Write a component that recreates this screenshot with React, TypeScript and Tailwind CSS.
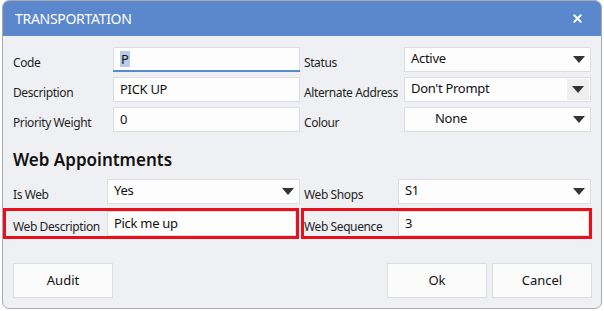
import { X } from "lucide-react";

const font = { fontFamily: '"Noto Sans", "Open Sans", sans-serif' };

function Arrow() {
    return (
        <svg width="12" height="7" viewBox="0 0 12 7" className="shrink-0">
            <path d="M0 0 H12 L6 7 Z" fill="#333" />
        </svg>
    );
}

function TextBox({ value, focused = false, w }: { value: string; focused?: boolean; w: string }) {
    return (
        <div className={`${w} h-[25px] bg-[#fdfdfd] border border-[#dedede] relative flex items-start pt-[3px] pl-[6px] text-[13px] tracking-[-0.3px] text-[#111]`}>
            {focused ? <span className="bg-[#b7cbeb] px-[1px] leading-[16px]">{value}</span> : <span className="leading-[16px]">{value}</span>}
            {focused && <div className="absolute left-[-1px] right-[-1px] bottom-[-1px] h-[2px] bg-[#5b87cd]"></div>}
        </div>
    );
}

function SelectBox({ value, w, indent = "pl-[6px]", boxed = false }: { value: string; w: string; indent?: string; boxed?: boolean }) {
    return (
        <div className={`${w} h-[25px] bg-[#fdfdfd] border border-[#dedede] flex items-center justify-between text-[13px] tracking-[-0.3px] text-[#111]`}>
            <span className={`${indent} leading-[16px] -mt-[3px]`}>{value}</span>
            {boxed ?
                <div className="w-[22px] h-[21px] bg-[#efefef] mr-[1px] flex items-center justify-center"><Arrow /></div>
                : <div className="mr-[5px] flex items-center"><Arrow /></div>}
        </div>
    );
}

function Label({ text, w }: { text: string; w: string }) {
    return <div className={`${w} shrink-0 text-[12px] tracking-[-0.4px] text-[#1e1e1e] pt-[8px] leading-[16px] whitespace-nowrap`}>{text}</div>;
}

function Btn({ text }: { text: string }) {
    return <button className="w-[100px] h-[35px] bg-[#fbfbfb] border border-[#dddddd] text-[13px] text-[#111]">{text}</button>;
}

export default function App() {
    return (
        <div className="w-[604px] h-[311px] bg-white pl-[2px]" style={font}>
            <div className="w-[600px] h-[309px] border border-[#a8abb0] rounded-[7px] bg-[#eff0f4] overflow-hidden flex flex-col">
                <div className="h-[35px] bg-[#5b87cd] flex items-center justify-between pl-[12px] pr-[17px]">
                    <span className="text-white text-[14px] tracking-[-0.3px] -mt-[1px]">TRANSPORTATION</span>
                    <X size={13} strokeWidth={3.5} color="white" />
                </div>

                <div className="flex flex-col pl-[10px] pt-[11px]">
                    <div className="flex gap-[4px]">
                        <div className="flex flex-col gap-[5px]">
                            <div className="flex"><Label text="Code" w="w-[100px]" /><TextBox value="P" focused w="w-[187px]" /></div>
                            <div className="flex"><Label text="Description" w="w-[100px]" /><TextBox value="PICK UP" w="w-[187px]" /></div>
                            <div className="flex"><Label text="Priority Weight" w="w-[100px]" /><TextBox value="0" w="w-[187px]" /></div>
                        </div>
                        <div className="flex flex-col gap-[5px]">
                            <div className="flex"><Label text="Status" w="w-[100px]" /><SelectBox value="Active" w="w-[187px]" /></div>
                            <div className="flex"><Label text="Alternate Address" w="w-[100px]" /><SelectBox value="Don't Prompt" w="w-[187px]" boxed /></div>
                            <div className="flex"><Label text="Colour" w="w-[100px]" /><SelectBox value="None" w="w-[187px]" indent="pl-[30px]" /></div>
                        </div>
                    </div>

                    <div className="text-[17px] font-semibold text-[#111] mt-[17px] leading-[22px]">Web Appointments</div>

                    <div className="flex gap-[1px] mt-[8px]">
                        <div className="flex flex-col gap-[4px]">
                            <div className="flex"><Label text="Is Web" w="w-[94px]" /><SelectBox value="Yes" w="w-[193px]" /></div>
                            <div className="-ml-[10px] w-[296px] h-[31px] border-[3px] border-[#e8101a] flex">
                                <Label text="Web Description" w="w-[101px] pl-[7px]" />
                                <TextBox value="Pick me up" w="w-[189px]" />
                            </div>
                        </div>
                        <div className="flex flex-col gap-[4px]">
                            <div className="flex pl-[3px]"><Label text="Web Shops" w="w-[94px]" /><SelectBox value="S1" w="w-[193px]" /></div>
                            <div className="w-[291px] h-[31px] border-[3px] border-[#e8101a] flex">
                                <Label text="Web Sequence" w="w-[94px]" />
                                <TextBox value="3" w="w-[191px]" />
                            </div>
                        </div>
                    </div>

                    <div className="flex justify-between mt-[24px] pr-[9px]">
                        <Btn text="Audit" />
                        <div className="flex gap-[5px]">
                            <Btn text="Ok" />
                            <Btn text="Cancel" />
                        </div>
                    </div>
                </div>
            </div>
        </div>
    );
}
